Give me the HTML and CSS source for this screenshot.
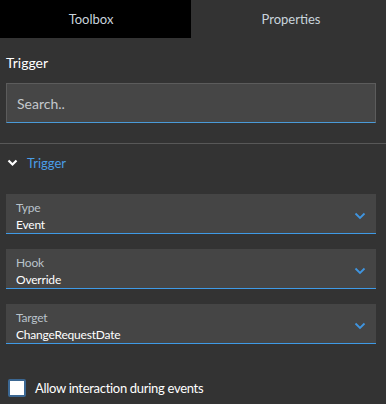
FILE: index.html
```html
<!DOCTYPE html>
<html lang="en">
<head>
    <meta charset="UTF-8">
    <meta name="viewport" content="width=device-width, initial-scale=1.0">
    <title>Properties</title>
    <link rel="stylesheet" href="styles.css">
</head>
<body>

    <!-- Tabs -->
    <div class="tabs">
        <div class="tab dark">Toolbox</div>
        <div class="tab">Properties</div>
    </div>

    <div class="panel">
        <h2>Trigger</h2>
        <div class="search">Search..</div>
    </div>

    <div class="divider"></div>

    <!-- Trigger section -->
    <div class="panel">
        <div class="section-head">
            <svg width="11" height="8" viewBox="0 0 11 8"><path d="M1.5 1.5 L5.5 5.5 L9.5 1.5" fill="none" stroke="#fff" stroke-width="2.2"/></svg>
            <span>Trigger</span>
        </div>

        <div class="field">
            <div class="field-text">
                <div class="label">Type</div>
                <div class="value">Event</div>
            </div>
            <svg class="caret" width="12" height="8" viewBox="0 0 12 8"><path d="M1.5 1.5 L6 6 L10.5 1.5" fill="none" stroke="#3f95e0" stroke-width="1.8"/></svg>
        </div>

        <div class="field">
            <div class="field-text">
                <div class="label">Hook</div>
                <div class="value">Override</div>
            </div>
            <svg class="caret" width="12" height="8" viewBox="0 0 12 8"><path d="M1.5 1.5 L6 6 L10.5 1.5" fill="none" stroke="#3f95e0" stroke-width="1.8"/></svg>
        </div>

        <div class="field">
            <div class="field-text">
                <div class="label">Target</div>
                <div class="value">ChangeRequestDate</div>
            </div>
            <svg class="caret" width="12" height="8" viewBox="0 0 12 8"><path d="M1.5 1.5 L6 6 L10.5 1.5" fill="none" stroke="#3f95e0" stroke-width="1.8"/></svg>
        </div>

        <label class="check">
            <span class="box"></span>
            Allow interaction during events
        </label>
    </div>

</body>
</html>
```

FILE: styles.css
```css
body {
    font-family: Lato, "Liberation Sans", sans-serif;
    background-color: #333333;
    color: #fff;
    margin: 0;
    width: 386px;
    height: 404px;
    overflow: hidden;
}

.tabs {
    display: flex;
    height: 38px;
}

.tab {
    flex: 1;
    display: flex;
    align-items: center;
    justify-content: center;
    font-size: 13px;
    color: #c9d3dc;
    padding-left: 5px;
}

.tab.dark {
    flex: 0 0 191px;
    background: #000;
    padding: 0 9px 0 0;
    box-sizing: border-box;
}

.panel {
    padding: 0 10px 0 6px;
}

h2 {
    font-size: 14px;
    font-weight: normal;
    margin: 16px 0 11px 0;
    line-height: 18px;
}

.search {
    height: 38px;
    background: #464646;
    border: 1px solid #5c5c5c;
    border-bottom-color: #4a9ad8;
    display: flex;
    align-items: center;
    padding-left: 10px;
    font-size: 14px;
    color: #c4c8cc;
}

.divider {
    height: 1px;
    background: #585858;
    margin-top: 20px;
}

.section-head {
    display: flex;
    align-items: center;
    height: 38px;
    font-size: 13px;
    color: #4a9de6;
    padding-left: 1px;
    margin-bottom: 12px;
}

.section-head svg {
    margin-right: 9px;
}

.field {
    height: 39px;
    box-sizing: content-box;
    background: #454545;
    border-bottom: 1px solid #3f9ae6;
    display: flex;
    align-items: flex-start;
    justify-content: space-between;
    padding: 0 10px;
    margin-bottom: 15px;
}

.field-text {
    padding-top: 6px;
    letter-spacing: -0.2px;
}

.label {
    font-size: 12px;
    color: #b9c3cb;
    line-height: 16px;
}

.value {
    font-size: 12px;
    color: #fff;
    line-height: 17px;
}

.caret {
    margin-top: 18px;
}

.check {
    display: flex;
    align-items: center;
    height: 18px;
    font-size: 13px;
    letter-spacing: -0.3px;
    color: #fff;
    margin-top: 35px;
    padding-left: 2px;
}

.box {
    width: 14px;
    height: 14px;
    background: #fff;
    border: 2px solid #3b6792;
    border-radius: 2px;
    margin-right: 9px;
}
```
